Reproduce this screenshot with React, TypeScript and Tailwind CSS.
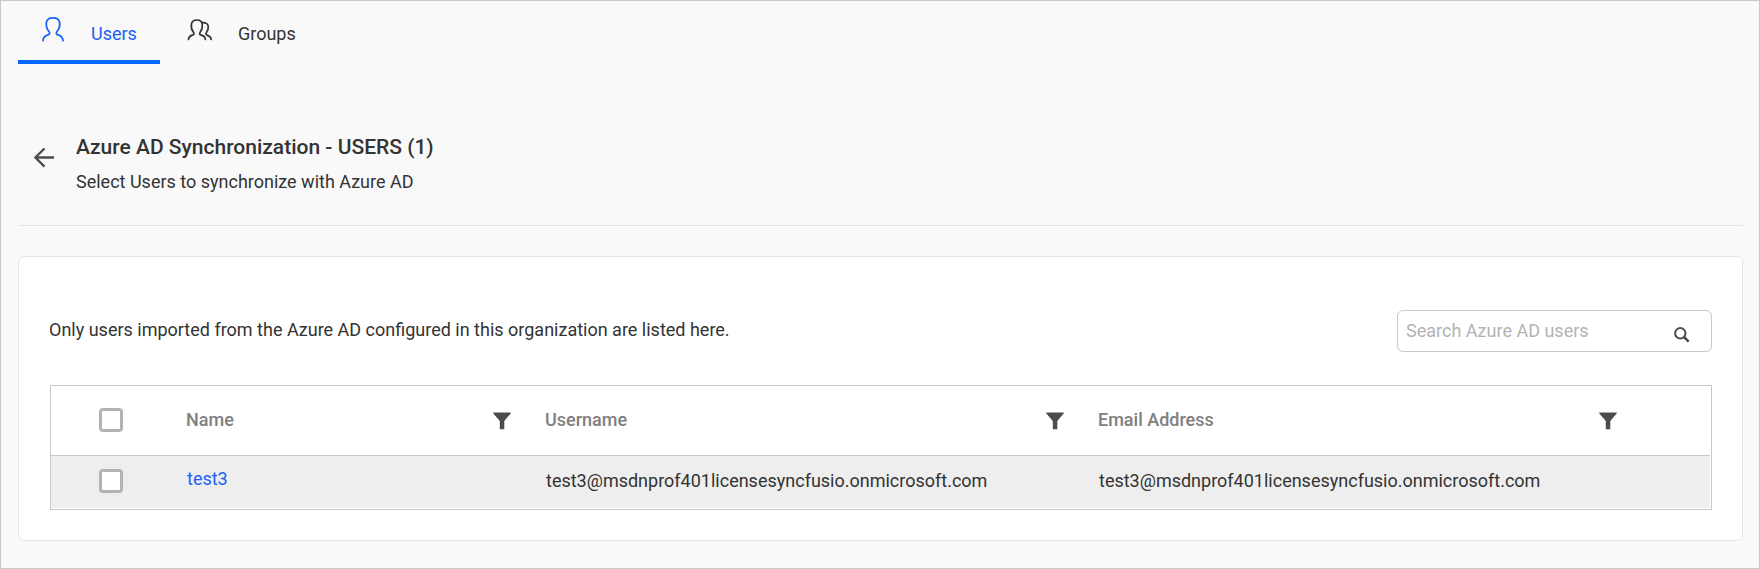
import type { ReactNode } from "react";

function UserIcon() {
  return (
    <svg width="24" height="28" viewBox="0 0 24 28" fill="none" stroke="currentColor" strokeWidth="1.8" strokeLinecap="round" strokeLinejoin="round">
      <path d="M2 24.5C2.2 20.5 4.6 19.4 7.6 18.6C8.8 18.2 9 16.8 8 15.5C5.8 12.8 5 9.500 5.300 6.800C5.700 3.600 8.500 1.900 12 1.900C15.500 1.900 18.300 3.600 18.700 6.800C19 9.500 18.200 12.800 16 15.500C15 16.800 15.200 18.200 16.400 18.600C19.400 19.400 21.800 20.500 22 24.500" />
    </svg>
  );
}

function GroupIcon() {
  return (
    <svg width="26" height="24" viewBox="0 0 26 24" fill="none" stroke="currentColor" strokeWidth="1.7" strokeLinecap="round" strokeLinejoin="round">
      <path d="M1.500 21.500C1.700 18.400 3.500 17.600 6 16.900C7.300 16.500 7.200 15.300 6.300 14C4.500 11.500 4 8.800 4.400 6.300C4.900 3.400 7.200 2 9.900 2C12.600 2 14.900 3.400 15.300 6.300C15.600 8.800 15 11.500 13.300 14C12.400 15.300 12.500 16.500 13.700 16.900C16.200 17.600 18.200 18.400 18.400 21.500" />
      <path d="M15 4.600C18.500 4.200 21 5.800 21.300 8.600C21.500 10.600 20.600 12.800 19.400 14.600C18.700 15.800 18.900 16.700 20 17.100C22 17.800 24 18.500 24.200 21.500" />
    </svg>
  );
}

function FilterIcon() {
  return (
    <svg width="18" height="18" viewBox="0 0 18 18" fill="#4c4c4c" className="shrink-0">
      <path d="M.3.500H17.700V1.500L11.300 9V17.300H6.800V9L.3 1.500Z" />
    </svg>
  );
}

function Checkbox() {
  return <span role="checkbox" aria-checked="false" className="mb-0.5 ml-12 h-6 w-6 shrink-0 rounded-[4px] border-3 border-[#b3b3b3] bg-white" />;
}

function HeaderCell({ children }: { children: ReactNode }) {
  return (
    <div className="flex w-[553px] items-center justify-between pr-[34px]">
      <span className="pb-0.5">{children}</span>
      <FilterIcon />
    </div>
  );
}

export default function App() {
  const email = "test3@msdnprof401licensesyncfusio.onmicrosoft.com";
  return (
    <div className="h-[569px] w-[1760px] border border-[#c8c8c8] bg-[#f9f9f9] pr-4 pl-[17px] font-['Roboto',sans-serif] text-[18px] leading-6 text-[#333]">
      <nav className="flex h-[63px]">
        <div className="flex w-[142px] border-b-4 border-[#0565ff] pl-[23px] text-[#1a62f5]">
          <div className="w-[50px] pt-[15px]"><UserIcon /></div>
          <span className="pt-[21px]">Users</span>
        </div>
        <div className="flex pl-[27px]">
          <div className="w-[51px] pt-[17px]"><GroupIcon /></div>
          <span className="pt-[21px]">Groups</span>
        </div>
      </nav>
      <header className="flex h-[162px] border-b border-[#e3e3e3] pl-[15px]">
        <svg width="21" height="20" viewBox="0 0 21 20" fill="none" stroke="#4c4c4c" strokeWidth="2.300" className="mt-[84px]">
          <path d="M21 9.500H2.500M11.500 .5L2.400 9.500L11.500 18.600" />
        </svg>
        <div className="pt-[71px] pl-[22px]">
          <h1 className="text-[21px] font-medium">Azure AD Synchronization - USERS (1)</h1>
          <p className="mt-[11px]">Select Users to synchronize with Azure AD</p>
        </div>
      </header>
      <main className="mt-[30px] h-[285px] rounded-md border border-[#e5e5e5] bg-white pt-[53px] pr-[30px] pl-[31px]">
        <div className="flex justify-between">
          <p className="-ml-px pt-2">Only users imported from the Azure AD configured in this organization are listed here.</p>
          <div className="flex h-[42px] w-[315px] items-center rounded-md border border-[#c8c8c8] pr-[21px] pl-2">
            <input placeholder="Search Azure AD users" className="w-0 flex-1 outline-none placeholder:text-[#b3b3b3]" />
            <svg width="16" height="16" viewBox="0 0 16 16" fill="none" stroke="#4c4c4c" className="mt-[7px]">
              <circle cx="6.300" cy="6.300" r="5.200" strokeWidth="2" />
              <path d="M10 10L14.700 14.700" strokeWidth="2.500" />
            </svg>
          </div>
        </div>
        <div className="mt-[33px] h-[125px] border border-[#c8c8c8]">
          <div className="mr-px flex h-[70px] items-center border-b border-[#c8c8c8] font-medium text-[#808080]">
            <Checkbox />
            <div className="flex w-[422px] items-center justify-between pr-[34px] pl-[63px]">
              <span className="pb-0.5">Name</span>
              <FilterIcon />
            </div>
            <HeaderCell>Username</HeaderCell>
            <HeaderCell>Email Address</HeaderCell>
          </div>
          <div className="mr-px flex h-[52px] items-center bg-[#eee]">
            <Checkbox />
            <div className="w-[423px] pb-[7px] pl-16 text-[#1a62f5]">test3</div>
            <div className="w-[553px] pb-0.5">{email}</div>
            <div className="pb-0.5">{email}</div>
          </div>
        </div>
      </main>
    </div>
  );
}
